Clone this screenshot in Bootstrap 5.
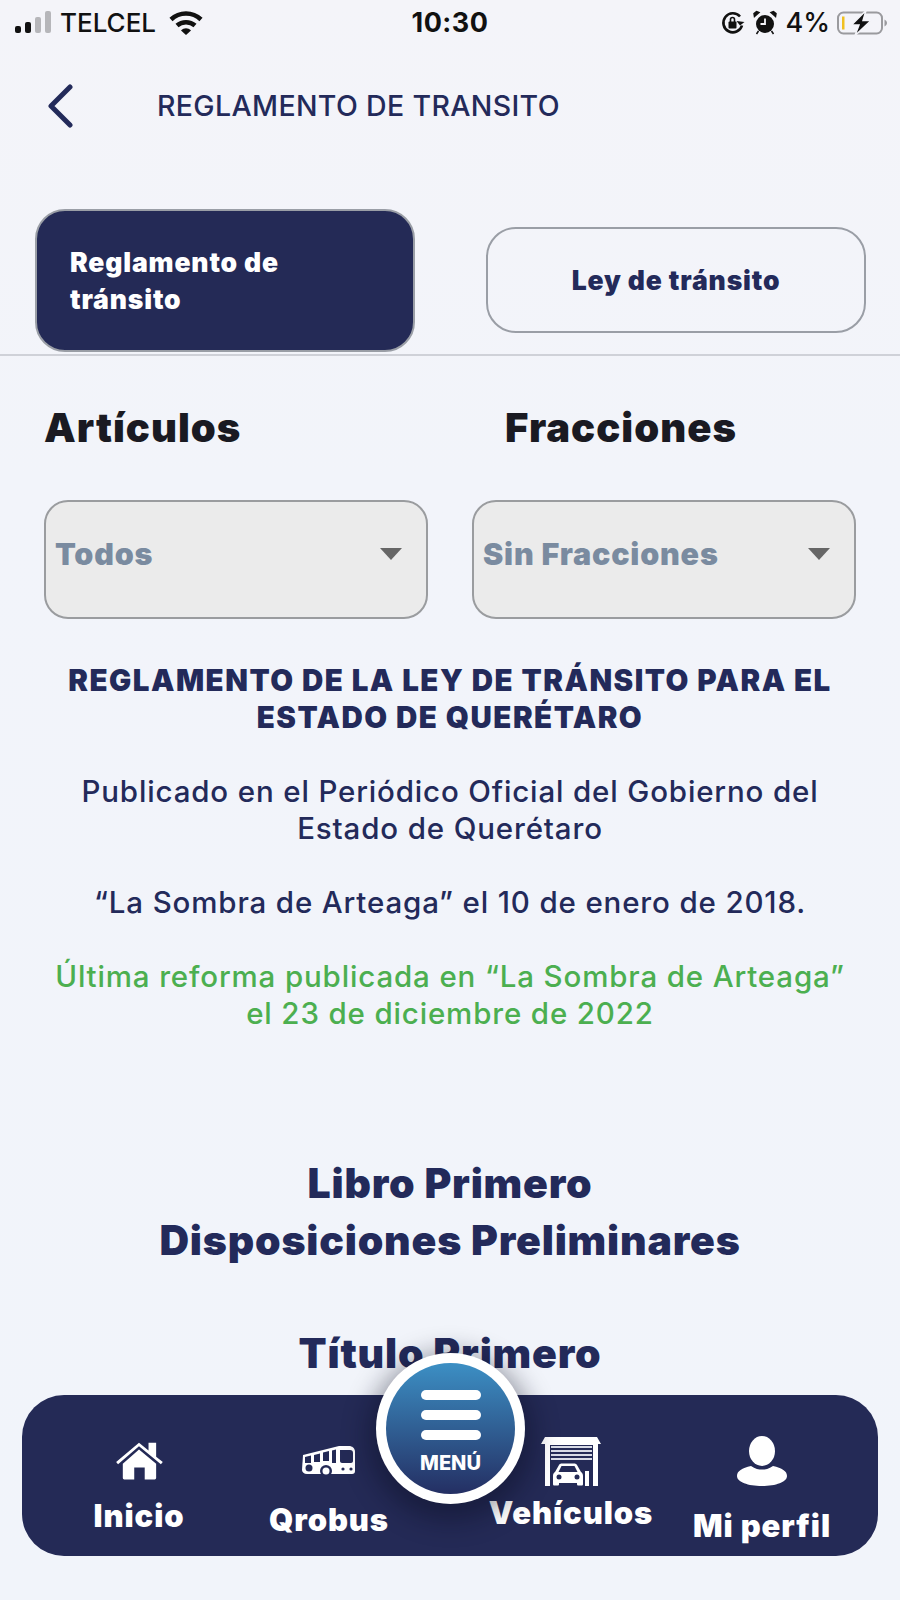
<!doctype html>
<html lang="es"><head><meta charset="utf-8"><title>Reglamento de tránsito</title>
<link href="https://cdn.jsdelivr.net/npm/bootstrap@5.3.0/dist/css/bootstrap.min.css" rel="stylesheet">
<style>
html,body{height:1600px;overflow:hidden}
body{width:900px;background:linear-gradient(#f4f4f9,#f2f4fa 30%,#f1f4fa);font-family:Inter,"Liberation Sans",sans-serif;color:#232a5a;position:relative}
.status-row{height:46px;padding:0 13px 0 15px;color:#111;font-size:26px;line-height:46px;font-weight:500}
.status-time{position:absolute;left:0;right:0;top:0;text-align:center;font-weight:700;font-size:27px;letter-spacing:.5px}
.status-left{gap:7px}.status-right{gap:8px}
.status-pct{font-size:27px;margin-right:-1px}
.wifi-ic{margin-left:6px}
.head-row{height:72px;margin-top:24px;padding-left:47px}
.head-title{font-size:28.500px;font-weight:500;margin-left:82px;letter-spacing:.35px}
.tabs-row{height:146px;margin-top:67px;padding:0 34px 0 35px}
.tab-box{width:380px;border:2px solid #9a9ea6;border-radius:30px;font-weight:900;font-size:26.500px;line-height:37px;letter-spacing:.85px}
.tab-on{height:143px;background:#242a56;color:#fff;padding:0 33px;align-self:flex-start;display:flex;align-items:center}
.tab-off{height:106px;margin-top:18px;color:#232a5a;background:transparent;display:flex;align-items:center;justify-content:center}
.tab-rule{height:2px;background:#cfd1d8;margin-top:-1px}
.labels-row{margin-top:44px;padding-left:44px;font-size:40px;font-weight:900;color:#1a1a22;line-height:56px;letter-spacing:1px}
.lab-a{width:461px}
.selects-row{margin-top:44px;padding:0 44px;gap:44px}
.sel-box{width:384px;height:119px;background:#ebebeb;border:2px solid #9a9c9f;border-radius:24px;padding:30px 24px 0 9px;color:#7a8ba0;font-weight:900;font-size:30.500px;line-height:44px;letter-spacing:.8px}
.sel-tri{width:0;height:0;border-left:11px solid transparent;border-right:11px solid transparent;border-top:12px solid #666;margin-top:16px}
.doc-title{margin:43px 0 0;text-align:center;font-size:29.500px;font-weight:900;line-height:37px;letter-spacing:1.500px}
.doc-p{margin:37px 0 0;text-align:center;font-size:29.500px;font-weight:500;line-height:37px;letter-spacing:.85px}
.doc-green{color:#4caf50}
.doc-h{margin:0;text-align:center;font-size:41px;font-weight:900;line-height:57px;letter-spacing:.8px}
.doc-h1{margin-top:123px}
.doc-h2{margin-top:56px}
.dock{position:absolute;left:22px;top:1395px;width:856px;height:161px;background:#242a56;border-radius:42px;color:#fff;font-weight:900;font-size:31px;letter-spacing:.9px}
.dock-item{position:relative;text-align:center;white-space:nowrap;width:190px}
.dock-ic{display:block;margin-left:auto;margin-right:auto}
.di-1{margin-left:22px;padding-top:45px}.di-1 .dock-ic{margin-bottom:13px}
.di-2{padding-top:50px}.di-2 .dock-ic{margin-bottom:18px}
.di-3{margin-left:52px;padding-top:42px}.di-3 .dock-ic{margin-bottom:3px}
.di-4{margin-left:1px;padding-top:41px}.di-4 .dock-ic{margin-bottom:17px}
.menu-fab{position:absolute;left:376px;top:1353px;width:149px;height:151px;border-radius:50%;background:#fff;padding:10px;box-shadow:0 8px 26px 8px rgba(10,12,30,.42)}
.menu-in{width:100%;height:100%;border-radius:50%;background:linear-gradient(#3c8fc4,#242f63);color:#fff;font-weight:800;font-size:20px;line-height:24px;padding-top:27px}
.bar-l{width:60px;height:10px;background:#fff;border-radius:5px;margin-bottom:10px}
.bar-l:nth-child(3){margin-bottom:11px}
</style></head><body>
<div class="status-row d-flex justify-content-between align-items-center">
 <div class="status-left d-flex align-items-center">
  <svg width="38" height="24" viewBox="0 0 38 24"><rect x="0" y="15" width="6" height="7" rx="2" fill="#111"/><rect x="10" y="11" width="6" height="11" rx="2" fill="#111"/><rect x="20" y="6" width="6" height="16" rx="2" fill="#b6b6ba"/><rect x="30" y="0" width="6" height="22" rx="2" fill="#b6b6ba"/></svg>
  <span>TELCEL</span>
  <svg class="wifi-ic" width="34" height="26" viewBox="0 0 34 26"><path d="M2 9.500C10.500 1.500 23.500 1.500 32 9.500" fill="none" stroke="#111" stroke-width="4.500"/><path d="M8 15.500C13 11 21 11 26 15.500" fill="none" stroke="#111" stroke-width="4.500"/><path d="M12 20.500C15 17.500 19 17.500 22 20.500L17 25Z" fill="#111"/></svg>
 </div>
 <div class="status-time">10:30</div>
 <div class="status-right d-flex align-items-center">
  <svg width="24" height="24" viewBox="0 0 24 24"><path d="M21 14.500A9.500 9.500 0 1 1 19 5.500" fill="none" stroke="#111" stroke-width="2.600"/><path d="M23.500 11L19 14.500 15.500 10Z" fill="#111"/><rect x="7.500" y="10.500" width="8" height="7" rx="1" fill="#111"/><path d="M9.500 11V8.500a2 2 0 0 1 4 0V11" fill="none" stroke="#111" stroke-width="1.600"/></svg>
  <svg width="24" height="26" viewBox="0 0 24 26"><circle cx="12" cy="14" r="9" fill="#111"/><path d="M12 8.500V14H7.500" fill="none" stroke="#f4f4f9" stroke-width="1.800"/><path d="M1.500 6.500L6 2.500 3.500 1.500 1 3.500ZM22.500 6.500L18 2.500 20.500 1.500 23 3.500ZM5.500 21l-2 3M18.500 21l2 3" fill="#111" stroke="#111" stroke-width="1.500"/></svg>
  <span class="status-pct">4%</span>
  <svg width="50" height="26" viewBox="0 0 50 26"><rect x="1" y="2.500" width="44" height="21" rx="5.500" fill="none" stroke="#9a9a9e" stroke-width="2"/><rect x="5" y="6.500" width="2.500" height="13" fill="#f0c020"/><path d="M47.500 9.500c1.500.8 2.500 2 2.500 3.500s-1 2.700-2.500 3.500Z" fill="#9a9a9e"/><path d="M29 .5L14.500 15H22L18 25.500 34 10.500H26Z" fill="#111" stroke="#f4f4f9" stroke-width="1.500"/></svg>
 </div>
</div>
<div class="head-row d-flex align-items-center">
 <svg width="28" height="44" viewBox="0 0 28 44"><path d="M23 3L4 22 23 41" fill="none" stroke="#232a5a" stroke-width="5" stroke-linecap="round" stroke-linejoin="round"/></svg>
 <div class="head-title">REGLAMENTO DE TRANSITO</div>
</div>
<div class="tabs-row d-flex justify-content-between">
 <div class="tab-box tab-on"><span>Reglamento de<br>tránsito</span></div>
 <div class="tab-box tab-off">Ley de tránsito</div>
</div>
<div class="tab-rule"></div>
<div class="labels-row d-flex"><div class="lab-a">Artículos</div><div>Fracciones</div></div>
<div class="selects-row d-flex">
 <div class="sel-box d-flex justify-content-between align-items-start"><span>Todos</span><span class="sel-tri"></span></div>
 <div class="sel-box d-flex justify-content-between align-items-start"><span>Sin Fracciones</span><span class="sel-tri"></span></div>
</div>
<h1 class="doc-title">REGLAMENTO DE LA LEY DE TRÁNSITO PARA EL<br>ESTADO DE QUERÉTARO</h1>
<p class="doc-p">Publicado en el Periódico Oficial del Gobierno del<br>Estado de Querétaro</p>
<p class="doc-p">“La Sombra de Arteaga” el 10 de enero de 2018.</p>
<p class="doc-p doc-green">Última reforma publicada en “La Sombra de Arteaga”<br>el 23 de diciembre de 2022</p>
<h2 class="doc-h doc-h1">Libro Primero<br>Disposiciones Preliminares</h2>
<h2 class="doc-h doc-h2">Título Primero</h2>

<nav class="dock d-flex">
 <div class="dock-item di-1">
  <svg class="dock-ic" width="50" height="40" viewBox="0 0 50 42"><path d="M1 23L25 3l10 8V3h8v14.500l7 5.500-2 2.500L25 6.500 3 25.500Z" fill="#fff"/><path d="M25 10L43 25v15a1.500 1.500 0 0 1-1.500 1.500H31V29H20v12.500H9.500A1.500 1.500 0 0 1 8 40V25Z" fill="#fff"/></svg>
  Inicio</div>
 <div class="dock-item di-2">
  <svg class="dock-ic" width="56" height="34" viewBox="0 0 56 34"><path d="M2 10L38 1h10c3 0 6 2 6 6v19c0 2-1 3-3 3H6c-3 0-5-2-5-4Z" fill="#fff"/><path d="M4 12l6-1.500V18H4ZM13 10l6-1.500V17h-6ZM22 7.500l6-1.500V16h-6ZM31 5.500l4-1V18h-4ZM39 5h10c2 0 3 1 3 3v8c0 1-1 2-2 2H41c-1 0-2-1-2-2Z" fill="#242a56"/><circle cx="25" cy="26" r="6" fill="#242a56"/><circle cx="25" cy="26" r="3.500" fill="#fff"/><circle cx="8" cy="23" r="3.500" fill="#242a56"/><circle cx="42" cy="24" r="1.600" fill="#242a56"/><circle cx="50" cy="24" r="1.600" fill="#242a56"/></svg>
  Qrobus</div>
 <div class="dock-item di-3">
  <svg class="dock-ic" width="60" height="50" viewBox="0 0 60 50"><path d="M4 0H56L60 7H57V49H52V8H9V49H4V7H0Z" fill="#fff"/><path d="M10 9H51V11H10ZM10 13H51V15H10ZM10 17H51V19H10ZM10 21H51V23H10Z" fill="#d8dbe6"/><path d="M14 35l4-7c.6-1 1.500-1.500 3-1.500H33c1.500 0 2.400.5 3 1.500l4 7c1.500 1 2 2 2 4v8c0 1-.5 1.500-1.500 1.500h-3c-1 0-1.500-.5-1.500-1.500v-1H18v1c0 1-.5 1.500-1.500 1.500h-3c-1 0-1.500-.5-1.500-1.500v-8c0-2 .5-3 2-4Z" fill="#fff"/><path d="M17.500 35l3-6h13l3 6Z" fill="#242a56"/><circle cx="18" cy="40" r="2.500" fill="#242a56"/><circle cx="36" cy="40" r="2.500" fill="#242a56"/><path d="M44 34h4v15h-4Z" fill="#fff"/></svg>
  Vehículos</div>
 <div class="dock-item di-4">
  <svg class="dock-ic" width="52" height="50" viewBox="0 0 52 50"><ellipse cx="26" cy="15" rx="13" ry="15" fill="#fff"/><path d="M1 40c0-5 5-8 14-10 4 3 8 3.500 11 3.500s7-.5 11-3.500c9 2 14 5 14 10 0 6-11 10-25 10S1 46 1 40Z" fill="#fff"/></svg>
  Mi perfil</div>
</nav>
<div class="menu-fab"><div class="menu-in d-flex flex-column align-items-center"><div class="bar-l"></div><div class="bar-l"></div><div class="bar-l"></div><div>MENÚ</div></div></div>
</body></html>
